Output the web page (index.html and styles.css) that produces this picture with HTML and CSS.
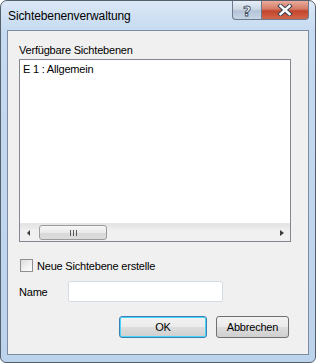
FILE: index.html
```html
<!DOCTYPE html>
<html lang="de">
<head>
    <meta charset="UTF-8">
    <title>Sichtebenenverwaltung</title>
    <link rel="stylesheet" href="styles.css">
</head>
<body>
    <div class="window">
        <div class="titlebar">
            <span class="title">Sichtebenenverwaltung</span>
            <div class="caption-buttons">
                <div class="cap-btn help"><span>?</span></div>
                <div class="cap-btn close">
                    <svg width="16" height="12" viewBox="0 0 16 12">
                        <path d="M3.5 2 L12.5 10 M12.5 2 L3.5 10" stroke="#3a4656" stroke-width="4.4" stroke-linecap="square"/>
                        <path d="M3.5 2 L12.5 10 M12.5 2 L3.5 10" stroke="#ffffff" stroke-width="2.4" stroke-linecap="square"/>
                    </svg>
                </div>
            </div>
        </div>

        <div class="client">
            <div class="group-label">Verfügbare Sichtebenen</div>

            <div class="listbox">
                <div class="list-items">
                    <div class="list-item">E 1 : Allgemein</div>
                </div>
                <div class="hscroll">
                    <div class="arrow left"></div>
                    <div class="track">
                        <div class="thumb"><span class="grip"></span></div>
                    </div>
                    <div class="arrow right"></div>
                </div>
            </div>

            <label class="check-row">
                <span class="checkbox"></span>
                <span>Neue Sichtebene erstelle</span>
            </label>

            <div class="name-row">
                <span class="name-label">Name</span>
                <input type="text" class="name-input">
            </div>

            <div class="button-row">
                <button class="btn default">OK</button>
                <button class="btn">Abbrechen</button>
            </div>
        </div>
    </div>
</body>
</html>
```

FILE: styles.css
```css
body {
    margin: 0;
    padding: 0;
    background: #ffffff;
    font-family: "Liberation Sans", Arial, sans-serif;
    font-size: 11px;
    letter-spacing: -0.2px;
    color: #000000;
}
.window {
    width: 316px;
    height: 363px;
    box-sizing: border-box;
    border: 1px solid #56606c;
    border-radius: 7px 7px 6px 6px;
    background: linear-gradient(to bottom, #dbe8f6 0px, #c6daf1 30px, #bcd3ec 100%);
    display: flex;
    flex-direction: column;
    overflow: hidden;
}
.titlebar {
    height: 29px;
    display: flex;
    align-items: flex-start;
    justify-content: space-between;
}
.title {
    margin: 8px 0 0 7px;
    font-size: 12px;
    letter-spacing: -0.1px;
    color: #000000;
}
.caption-buttons {
    display: flex;
    margin-right: 6px;
}
.cap-btn {
    height: 18px;
    border: 1px solid #6b7a8d;
    border-top: none;
    display: flex;
    align-items: center;
    justify-content: center;
}
.cap-btn.help {
    width: 28px;
    border-radius: 0 0 0 4px;
    border-right: none;
    background: linear-gradient(to bottom, #e6eef7 0%, #cdd8e5 45%, #b4c3d6 55%, #c8d6e6 100%);
}
.cap-btn.help span {
    font-family: "DejaVu Sans", sans-serif;
    font-weight: bold;
    font-size: 14px;
    letter-spacing: 0;
    color: #ffffff;
    -webkit-text-stroke: 0.9px #3e5068;
    margin-top: 1px;
}
.cap-btn.close {
    width: 46px;
    border-radius: 0 0 4px 0;
    background: linear-gradient(to bottom, #eaab9b 0%, #d57a66 45%, #c2442c 55%, #d2674c 100%);
}
.client {
    flex: 1;
    margin: 0 6px 7px 6px;
    border: 1px solid #7d8c9e;
    background: #f0f0f0;
    padding: 11px 17px 0 11px;
}
.group-label {
    line-height: 16px;
    height: 16px;
    margin-bottom: 1px;
}
.listbox {
    height: 181px;
    border: 1px solid #828790;
    background: #ffffff;
    display: flex;
    flex-direction: column;
}
.list-items {
    flex: 1;
    padding: 2px 3px;
}
.list-item {
    line-height: 14px;
}
.hscroll {
    height: 17px;
    display: flex;
    background: linear-gradient(to bottom, #e3e3e3 0%, #f0f0f0 40%, #f0f0f0 100%);
    border-top: 1px solid #e6e6e6;
}
.arrow {
    width: 17px;
    display: flex;
    align-items: center;
    justify-content: center;
}
.arrow::before {
    content: "";
    width: 0;
    height: 0;
    border-top: 3px solid transparent;
    border-bottom: 3px solid transparent;
}
.arrow.left::before {
    border-right: 3px solid #3c3c3c;
}
.arrow.right::before {
    border-left: 4px solid #3c3c3c;
}
.track {
    flex: 1;
    display: flex;
    align-items: center;
}
.thumb {
    width: 68px;
    height: 15px;
    margin-left: 2px;
    box-sizing: border-box;
    border: 1px solid #9b9b9b;
    border-radius: 3px;
    background: linear-gradient(to bottom, #f6f6f6 0%, #eaeaea 50%, #d9d9d9 51%, #dcdcdc 100%);
    display: flex;
    align-items: center;
    justify-content: center;
}
.grip {
    width: 7px;
    height: 6px;
    background: repeating-linear-gradient(to right, #5a5a5a 0, #5a5a5a 1px, transparent 1px, transparent 3px);
}
.check-row {
    display: flex;
    align-items: center;
    margin-top: 16px;
    height: 15px;
    gap: 4px;
}
.checkbox {
    width: 11px;
    height: 11px;
    border: 1px solid #8f8f8f;
    background: linear-gradient(135deg, #dcdcdc 0%, #f2f2f2 60%, #fdfdfd 100%);
    margin-left: 1px;
}
.name-row {
    display: flex;
    align-items: center;
    margin-top: 8px;
    height: 21px;
}
.name-label {
    width: 49px;
}
.name-input {
    width: 155px;
    height: 21px;
    box-sizing: border-box;
    border: 1px solid #d5dbe4;
    border-radius: 2px;
    background: #ffffff;
    margin: 0;
    padding: 0 3px;
}
.button-row {
    display: flex;
    justify-content: flex-end;
    gap: 9px;
    margin-top: 14px;
    margin-right: 2px;
}
.btn {
    height: 22px;
    box-sizing: border-box;
    border: 1px solid #707070;
    border-radius: 3px;
    background: linear-gradient(to bottom, #f2f2f2 0%, #ebebeb 50%, #dddddd 51%, #cfcfcf 100%);
    font-family: "Liberation Sans", Arial, sans-serif;
    font-size: 11px;
    letter-spacing: -0.2px;
    color: #000000;
    padding: 0;
    width: 73px;
}
.btn.default {
    width: 88px;
    border-color: #3c7fb1;
    box-shadow: inset 0 0 0 1px #48d5fb;
}
```
